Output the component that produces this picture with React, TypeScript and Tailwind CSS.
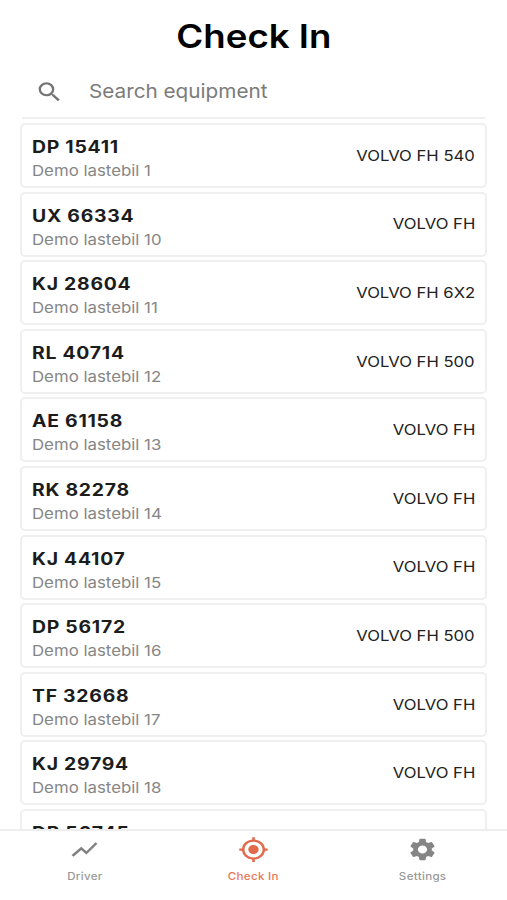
import { MdSearch, MdShowChart, MdGpsFixed, MdSettings } from "react-icons/md";

const rows = [
  ["DP 15411", "Demo lastebil 1", "VOLVO FH 540"],
  ["UX 66334", "Demo lastebil 10", "VOLVO FH"],
  ["KJ 28604", "Demo lastebil 11", "VOLVO FH 6X2"],
  ["RL 40714", "Demo lastebil 12", "VOLVO FH 500"],
  ["AE 61158", "Demo lastebil 13", "VOLVO FH"],
  ["RK 82278", "Demo lastebil 14", "VOLVO FH"],
  ["KJ 44107", "Demo lastebil 15", "VOLVO FH"],
  ["DP 56172", "Demo lastebil 16", "VOLVO FH 500"],
  ["TF 32668", "Demo lastebil 17", "VOLVO FH"],
  ["KJ 29794", "Demo lastebil 18", "VOLVO FH"],
  ["DP 56745", "", ""],
];

const tabs = [
  { label: "Driver", Icon: MdShowChart, icon: "text-[#808080]", text: "text-[#999999]" },
  { label: "Check In", Icon: MdGpsFixed, icon: "text-[#e2694a]", text: "text-[#e8775a]" },
  { label: "Settings", Icon: MdSettings, icon: "text-[#858585]", text: "text-[#999999]" },
];

export default function App() {
  return (
    <div className="flex h-[900px] w-[507px] flex-col overflow-hidden bg-white font-['Inter',sans-serif]">
      <header className="flex h-[72px] shrink-0 items-center justify-center">
        <h1 className="scale-x-[1.11] text-[33px] leading-[40px] font-semibold text-black">Check In</h1>
      </header>
      <div className="mx-[22px] flex h-[47px] shrink-0 items-center border-b-2 border-[#f0f0f0] pb-[6px] pl-[13px]">
        <MdSearch className="h-[26px] w-[29px] text-[#757575]" preserveAspectRatio="none" />
        <span className="ml-[25px] origin-left scale-x-[1.09] pt-px text-[19px] leading-6 text-[#7b7b7b]">
          Search equipment
        </span>
      </div>
      <main className="flex min-h-0 flex-1 flex-col gap-[3.6px] overflow-hidden px-[20px] pt-[4px]">
        {rows.map(([plate, name, model]) => (
          <div
            key={plate}
            className="flex h-[65px] shrink-0 items-center justify-between rounded-[5px] border-2 border-[#efefef] px-[10px]"
          >
            <div className="flex flex-col items-start pt-[7px]">
              <div className="h-6 origin-left scale-x-[1.14] text-[17px] leading-6 font-bold tracking-[0.65px] text-[#1c1c1c]">
                {plate}
              </div>
              <div className="h-6 origin-left scale-x-[1.12] text-[15px] leading-6 text-[#868686]">{name}</div>
            </div>
            <div className="origin-right scale-x-[1.11] pt-[0.8px] text-[15px] leading-6 text-[#222222]">{model}</div>
          </div>
        ))}
      </main>
      <nav className="flex h-[71px] shrink-0 border-t-2 border-[#eeeeee] bg-white">
        {tabs.map(({ label, Icon, icon, text }) => (
          <div key={label} className="flex flex-1 flex-col items-center pt-[5px]">
            <Icon className={`h-[27px] w-[31px] ${icon}`} preserveAspectRatio="none" />
            <span className={`mt-[5px] ml-[0.5px] scale-x-[1.05] text-[11px] leading-4 font-medium tracking-[0.3px] ${text}`}>
              {label}
            </span>
          </div>
        ))}
      </nav>
    </div>
  );
}
